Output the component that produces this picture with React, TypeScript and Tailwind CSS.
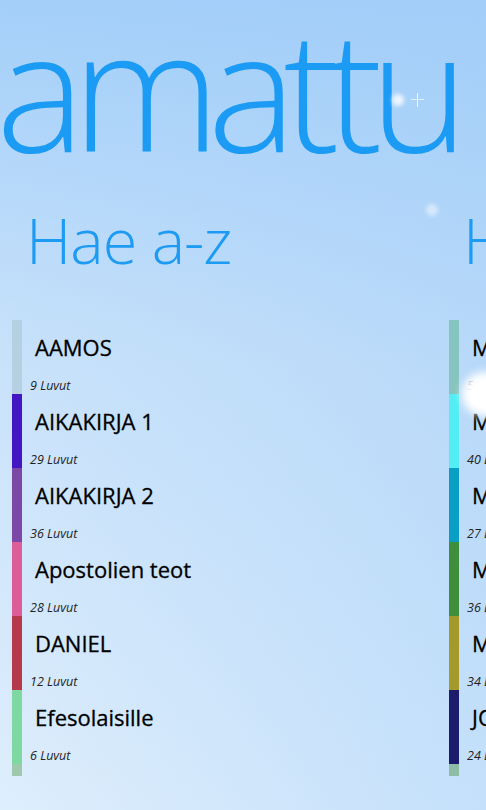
import React from 'react'

type Book = { name: string, chapters: number, color: string }

const alphabetical: Book[] = [
  { name: "AAMOS", chapters: 9, color: "bg-[#b5d0e0]" },
  { name: "AIKAKIRJA 1", chapters: 29, color: "bg-[#4316c4]" },
  { name: "AIKAKIRJA 2", chapters: 36, color: "bg-[#7c48a8]" },
  { name: "Apostolien teot", chapters: 28, color: "bg-[#dc5d98]" },
  { name: "DANIEL", chapters: 12, color: "bg-[#b5394a]" },
  { name: "Efesolaisille", chapters: 6, color: "bg-[#7ed8a2]" },
  { name: "Filemonille", chapters: 1, color: "bg-[#9ec9ad]" },
]

const ordered: Book[] = [
  { name: "MOOSEKSEN KIRJA 1", chapters: 50, color: "bg-[#86c4bf]" },
  { name: "MOOSEKSEN KIRJA 2", chapters: 40, color: "bg-[#52eef4]" },
  { name: "MOOSEKSEN KIRJA 3", chapters: 27, color: "bg-[#0a9ec4]" },
  { name: "MOOSEKSEN KIRJA 4", chapters: 36, color: "bg-[#3e8e3c]" },
  { name: "MOOSEKSEN KIRJA 5", chapters: 34, color: "bg-[#a39a2a]" },
  { name: "JOOSUA", chapters: 24, color: "bg-[#1b1c6c]" },
  { name: "TUOMARIEN KIRJA", chapters: 21, color: "bg-[#8fbca6]" },
]

const BookItem = ({ book }: { book: Book }) => (
  <div className="flex h-[74px] shrink-0">
    <div className={`w-[10px] shrink-0 ${book.color}`}></div>
    <div className="flex flex-col whitespace-nowrap">
      <div className="pl-[13px] pt-[16px] text-[22px] leading-[22px] text-black [-webkit-text-stroke:0.3px_black]">{book.name}</div>
      <div className="pl-[8px] mt-[22px] text-[12.5px] leading-none italic text-[#222]">{book.chapters} Luvut</div>
    </div>
  </div>
)

const Section = ({ title, books }: { title: string, books: Book[] }) => (
  <div className="w-[437px] shrink-0 pl-[12px] flex flex-col">
    <h2 className="pl-[14px] mt-[37px] text-[63px] leading-none font-light tracking-[-1px] text-[#1d9bf2] whitespace-nowrap">{title}</h2>
    <div className="mt-[49px] h-[456px] overflow-hidden flex flex-col">
      {books.map((b) => <BookItem key={b.name} book={b} />)}
    </div>
  </div>
)

export default function App() {
  return (
    <div className="relative w-[486px] h-[810px] overflow-hidden bg-gradient-to-b from-[#a3cff9] via-[#c9e2fa] via-45% to-[#deeefc] font-['Open_Sans',sans-serif]">
      <div className="absolute inset-0 bg-gradient-to-r from-transparent to-[#9ecbf8]/40"></div>
      <div className="relative">
        <h1 className="ml-[-4px] mt-[3px] text-[168px] leading-none font-light text-[#1b9bf3] tracking-[-13px] whitespace-nowrap">amattu</h1>
        <div className="flex">
          <Section title="Hae a-z" books={alphabetical} />
          <Section title="Hae järjestyksessä" books={ordered} />
        </div>
      </div>
      <div className="absolute left-[392px] top-[94px] w-[12px] h-[12px] rounded-full bg-white/80 blur-[2px]"></div>
      <div className="absolute left-[417px] top-[93px] w-[1px] h-[14px] bg-white/80"></div>
      <div className="absolute left-[411px] top-[99px] w-[13px] h-[1px] bg-white/70"></div>
      <div className="absolute left-[426px] top-[204px] w-[12px] h-[12px] rounded-full bg-white/50 blur-[2px]"></div>
      <div className="absolute left-[462px] top-[372px] w-[50px] h-[44px] rounded-full bg-white blur-[4px]"></div>
    </div>
  )
}
